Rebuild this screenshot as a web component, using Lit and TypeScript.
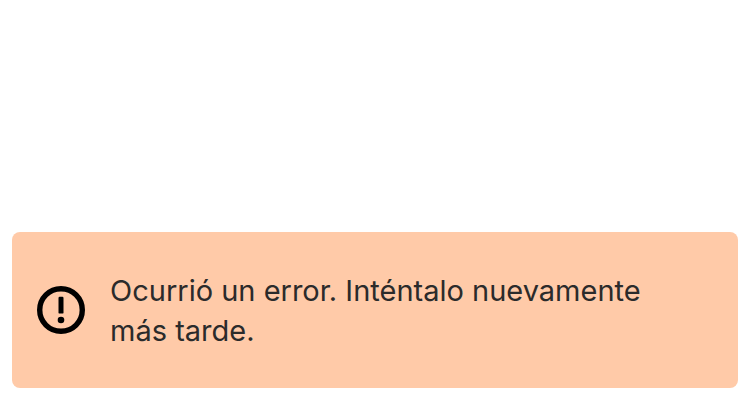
import { LitElement, html, css } from "lit";
import { customElement } from "lit/decorators.js";

@customElement("error-banner")
class ErrorBanner extends LitElement {
  static styles = css`
    :host {
      display: block;
    }
    .banner {
      display: flex;
      align-items: center;
      gap: 24px;
      padding: 37px 48px 37px 24px;
      border-radius: 8px;
      background: #ffcaa8;
      color: #2b2b2b;
    }
    .icon {
      flex: none;
      width: 50px;
      height: 50px;
    }
    .message {
      margin: 0;
      padding-top: 2px;
      font-family: Inter, "Liberation Sans", sans-serif;
      font-size: 29px;
      line-height: 40px;
    }
  `;

  render() {
    return html`
      <div class="banner" role="alert">
        <svg class="icon" viewBox="0 0 50 50" aria-hidden="true">
          <circle cx="25" cy="25" r="21.3" fill="none" stroke="#000" stroke-width="5.4" />
          <rect x="22.5" y="11.8" width="5" height="16.8" rx="1.2" fill="#000" />
          <circle cx="25" cy="35" r="3.3" fill="#000" />
        </svg>
        <p class="message"><slot></slot></p>
      </div>
    `;
  }
}

@customElement("app-root")
class AppRoot extends LitElement {
  static styles = css`
    :host {
      display: flex;
      flex-direction: column;
      justify-content: flex-end;
      box-sizing: border-box;
      min-height: 100vh;
      padding: 12px;
      background: #fff;
    }
  `;

  render() {
    return html`<error-banner>Ocurrió un error. Inténtalo nuevamente más tarde.</error-banner>`;
  }
}
